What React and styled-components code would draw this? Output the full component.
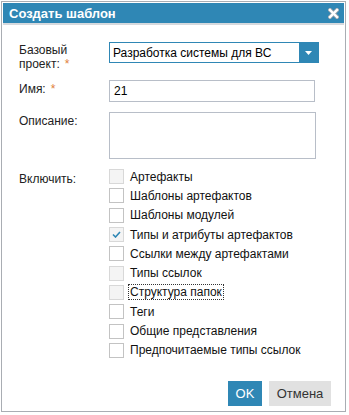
import React from "react";
import styled, { createGlobalStyle } from "styled-components";

const GlobalStyle = createGlobalStyle`
  body {
    margin: 0;
    background: #fff;
    font-family: "Liberation Sans", Arial, sans-serif;
  }
`;

const Dialog = styled.div`
  margin: 1px 0 0 1px;
  width: 345px;
  height: 411px;
  border: 1px solid #a9adb3;
  padding: 1px;
  box-sizing: border-box;
  display: flex;
  flex-direction: column;
  background: #fff;
`;

const Header = styled.div`
  height: 20px;
  background: #2f87b5;
  border-bottom: 2px solid #d6d9dd;
  display: flex;
  align-items: center;
  justify-content: space-between;
  padding: 0 5px 0 6px;
`;

const Title = styled.span`
  color: #fff;
  font-weight: bold;
  font-size: 13px;
`;

const Body = styled.div`
  flex: 1;
  padding: 17px 0 0 16px;
  display: grid;
  grid-template-columns: 90px 206px;
  grid-template-rows: 28px 22px 47px auto;
  align-content: start;
  row-gap: 10px;
`;

const Label = styled.div`
  font-size: 12px;
  line-height: 14px;
  color: #222;
  padding-top: ${(p) => p.offset || 2}px;
`;

const Star = styled.span`
  color: #e0823a;
  margin-left: 5px;
`;

const Select = styled.div`
  height: 21px;
  width: 210px;
  box-sizing: border-box;
  border: 1px solid #2f87b5;
  display: flex;
  font-size: 12px;
  color: #000;
`;

const SelectText = styled.div`
  flex: 1;
  display: flex;
  align-items: center;
  padding-left: 3px;
`;

const SelectButton = styled.div`
  width: 19px;
  background: #2f87b5;
  display: flex;
  align-items: center;
  justify-content: center;
`;

const Input = styled.div`
  height: 22px;
  box-sizing: border-box;
  border: 1px solid #b8bec8;
  font-size: 12px;
  display: flex;
  align-items: center;
  padding-left: 4px;
  color: #000;
`;

const TextArea = styled.div`
  height: 47px;
  width: 207px;
  box-sizing: border-box;
  border: 1px solid #b8bec8;
`;

const Checks = styled.div`
  display: flex;
  flex-direction: column;
  gap: 4px;
`;

const CheckRow = styled.label`
  display: flex;
  align-items: center;
  gap: 5px;
  font-size: 12px;
  color: #111;
  height: 15.3px;
`;

const Box = styled.span`
  width: 15px;
  height: 15px;
  box-sizing: border-box;
  border: 1px solid ${(p) => (p.faded ? "#d8d8d8" : "#c3c3c3")};
  background: ${(p) => (p.faded ? "#f4f4f4" : "#fff")};
  display: flex;
  align-items: center;
  justify-content: center;
  flex: none;
`;

const CheckText = styled.span`
  outline: ${(p) => (p.focused ? "1px dotted #333" : "none")};
  padding: 0 1px;
  line-height: 14px;
`;

const Footer = styled.div`
  display: flex;
  justify-content: flex-end;
  gap: 7px;
  padding: 0 13px 4px 0;
`;

const Button = styled.button`
  height: 25px;
  border: none;
  font-family: "Liberation Sans", Arial, sans-serif;
  font-size: 13px;
  padding: 0;
  width: ${(p) => p.w}px;
  background: ${(p) => (p.primary ? "#2f87b5" : "#e1e1e1")};
  color: ${(p) => (p.primary ? "#fff" : "#333")};
`;

const items = [
  { text: "Артефакты", faded: true },
  { text: "Шаблоны артефактов" },
  { text: "Шаблоны модулей" },
  { text: "Типы и атрибуты артефактов", faded: true, checked: true },
  { text: "Ссылки между артефактами" },
  { text: "Типы ссылок", faded: true },
  { text: "Структура папок", faded: true, focused: true },
  { text: "Теги" },
  { text: "Общие представления" },
  { text: "Предпочитаемые типы ссылок" },
];

export default function App() {
  return (
    <>
      <GlobalStyle />
      <Dialog>
        <Header>
          <Title>Создать шаблон</Title>
          <svg width="11" height="11" viewBox="0 0 11 11">
            <path d="M2 2 L9 9 M9 2 L2 9" stroke="#9aa3ab" strokeWidth="4" strokeLinecap="square" />
            <path d="M2 2 L9 9 M9 2 L2 9" stroke="#fff" strokeWidth="2.4" strokeLinecap="square" />
          </svg>
        </Header>
        <Body>
          <Label offset={1}>
            Базовый
            <br />
            проект:<Star>*</Star>
          </Label>
          <Select>
            <SelectText>Разработка системы для ВС</SelectText>
            <SelectButton>
              <svg width="7" height="4" viewBox="0 0 7 4">
                <path d="M0 0 H7 L3.5 4 Z" fill="#fff" />
              </svg>
            </SelectButton>
          </Select>
          <Label>
            Имя:<Star>*</Star>
          </Label>
          <Input>21</Input>
          <Label>Описание:</Label>
          <TextArea />
          <Label offset={3}>Включить:</Label>
          <Checks>
            {items.map((it) => (
              <CheckRow key={it.text}>
                <Box faded={it.faded}>
                  {it.checked && (
                    <svg width="9" height="7" viewBox="0 0 9 7">
                      <path d="M1 3.5 L3.5 6 L8 1" stroke="#2f87b5" strokeWidth="1.6" fill="none" />
                    </svg>
                  )}
                </Box>
                <CheckText focused={it.focused}>{it.text}</CheckText>
              </CheckRow>
            ))}
          </Checks>
        </Body>
        <Footer>
          <Button primary w={34}>OK</Button>
          <Button w={62}>Отмена</Button>
        </Footer>
      </Dialog>
    </>
  );
}
